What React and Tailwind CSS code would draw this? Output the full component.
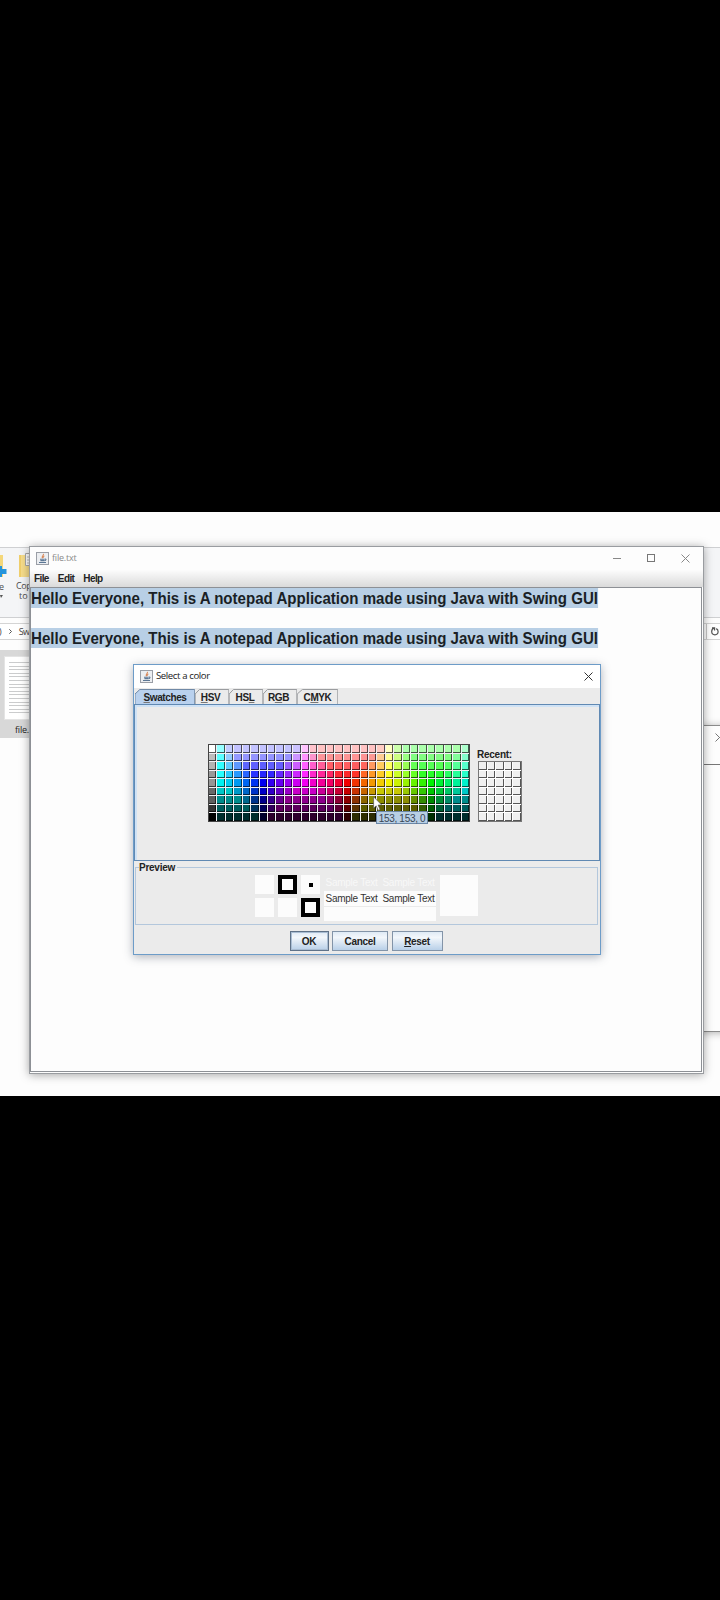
import React from "react";

const SANS = "font-['Liberation_Sans',Arial,sans-serif]";
const UI = "font-['Open_Sans','Noto_Sans',sans-serif]";

const clamp = (v, lo, hi) => Math.max(lo, Math.min(hi, v));
const GRAYS = [255, 190, 180, 153, 150, 105, 95, 51, 0];
const LOWS = [195, 148, 95, 40, 0, 0, 0, 0, 0];
const HIGHS = [255, 255, 255, 255, 242, 200, 140, 92, 45];

// Triangular hue ring over 30 columns, peaking at the given column.
function channel(col, peak) {
  const raw = Math.abs(col - peak) % 30;
  const d = Math.min(raw, 30 - raw);
  return 255 - 51 * Math.max(0, d - 5);
}

function swatch(row, col) {
  if (col === 0) return `rgb(${GRAYS[row]},${GRAYS[row]},${GRAYS[row]})`;
  let low = LOWS[row];
  if (col === 1) low = [150, 90, 50][row] ?? low;
  if (col >= 22) low = [172, 130, 85][row] ?? low;
  const c = [16, 26, 6].map((p) => clamp(channel(col, p), low, HIGHS[row]));
  return `rgb(${c.join(",")})`;
}

const SWATCHES = Array.from({ length: 9 * 31 }, (_, i) => swatch(Math.floor(i / 31), i % 31));

function JavaIcon() {
  return (
    <svg className="h-[13px] w-[13px] shrink-0" viewBox="0 0 13 13" fill="none">
      <rect x="0.5" y="0.5" width="12" height="12" fill="#eceef1" stroke="#9a9ea6" />
      <path d="M7.2 1.8C8.6 3.2 5 3.9 6.4 6.2M8.4 3.9C6.8 4.6 7 5.2 7.4 6" stroke="#d98a5c" strokeWidth="1.1" />
      <path d="M4 7.3h4.7M4.4 8.6h4M3 10.5h7M8.9 7c1.6-.3 1.3 1.5-.3 1.7" stroke="#5c7795" strokeWidth="1.1" />
    </svg>
  );
}

function Cross({ className }) {
  return (
    <svg className={className} viewBox="0 0 9 9" fill="none" stroke="currentColor">
      <path d="M0.5 0.5l8 8M8.5 0.5l-8 8" />
    </svg>
  );
}

function Tab({ mark, before = "", after, active, className }) {
  return (
    <div className={`relative flex h-full items-center justify-center ${className}`}>
      <svg className="absolute inset-0 h-full w-full" viewBox="0 0 100 15" preserveAspectRatio="none">
        <path
          d={active ? "M0 15V5L8 0.5H99.5V15" : "M0.5 15V5L13 0.5H99.5V15"}
          fill={active ? "#b9d1ee" : "#ebebeb"}
          stroke={active ? "#7089a6" : "#9a9c9f"}
          vectorEffect="non-scaling-stroke"
        />
      </svg>
      <span className="relative mt-[2px] whitespace-nowrap">
        {before}
        <span className="underline decoration-[#777] decoration-1 underline-offset-1">{mark}</span>
        {after}
      </span>
    </div>
  );
}

function Button({ children, className }) {
  return (
    <div className={`flex h-[20px] items-center justify-center border bg-linear-to-b from-[#dfeaf5] via-[#f3f7fb] via-30% to-[#b9d0e8] pt-px ${className}`}>
      {children}
    </div>
  );
}

function Explorer() {
  return (
    <div className="absolute inset-x-0 top-[35px] flex h-full flex-col">
      <div className="flex h-[71px] justify-between border-y border-[#cfd0d2] bg-[#f4f5f7]">
        <div className={`flex w-[30px] gap-[12px] overflow-hidden text-[9px] leading-[10px] text-[#4c4c4c] ${UI}`}>
          <div className="flex w-[7px] shrink-0 flex-col pt-[7px]">
            <svg className="h-[24px] w-[7px]" viewBox="0 0 7 24">
              <path d="M0 0h3v22H0z" fill="#f4d77a" />
              <path d="M0 11h2v3h4.5v5H2v3H0z" fill="#2494dc" />
            </svg>
            <span className="mt-[3px] -ml-px">e</span>
            <svg className="mt-[3px] h-[3px] w-[4px]" viewBox="0 0 4 3"><path d="M0 0h3L1 3z" fill="#555" /></svg>
          </div>
          <div className="flex flex-col pt-[5px] whitespace-nowrap">
            <svg className="h-[26px] w-[14px]" viewBox="0 0 14 26">
              <path d="M0 2h14v22H0z" fill="#f7dd8b" />
              <path d="M0 2h2v22H0z" fill="#f0cf6c" />
              <path d="M6.5 0.5H14v12H6.5z" fill="#fff" stroke="#a8a8a8" />
              <path d="M8 4h6M8 7h6M8 10h6" stroke="#bbb" />
            </svg>
            <span className="mt-[2px] -ml-[3px] tracking-[-0.4px]">Cop</span>
            <span>to</span>
          </div>
        </div>
      </div>
      <div className="mt-[5px] flex h-[17px] items-center justify-between border-y border-[#d4d4d4] bg-white">
        <div className={`flex items-center gap-[7px] text-[9px] text-[#444] ${UI}`}>
          <span className="-ml-px">)</span>
          <svg className="h-[5px] w-[3px]" viewBox="0 0 3 5" fill="none" stroke="#555"><path d="M0.3 0.3L2.5 2.5 0.3 4.7" /></svg>
          <span className="tracking-[-0.5px]">Sw</span>
        </div>
        <div className="flex h-full w-[14px] items-center border-l border-[#c8c8c8] pl-[4px]">
          <svg className="h-[9px] w-[8px]" viewBox="0 0 8 9" fill="none" stroke="#555" strokeWidth="1.2">
            <path d="M1 0.8h2.6v2.6M3.2 1.2C1.8 1.5 0.7 2.8 0.7 4.6a3.2 3.2 0 0 0 6.4 0C7.1 3.2 6.3 2 5.2 1.6" />
          </svg>
        </div>
      </div>
      <div className="mt-[10px] flex h-[88px] w-[60px] flex-col bg-[#d8d8d8] pt-[6px]">
        <div className="ml-[4px] flex h-[64px] flex-col gap-[2.6px] border border-[#e4e4e4] bg-white pt-[5px] pl-[4px]">
          {Array.from({ length: 15 }, (_, i) => (
            <div key={i} className="h-px shrink-0 bg-[#cbcccd]" />
          ))}
        </div>
        <span className={`ml-[15px] pt-[3px] text-[9px] leading-[14px] tracking-[-0.2px] text-[#222] ${UI}`}>file.</span>
      </div>
    </div>
  );
}

function ColorDialog() {
  return (
    <div className={`absolute top-[152px] left-[133px] flex h-[291px] w-[468px] flex-col border border-[#6d9cc8] bg-[#ebebeb] text-[10px] font-bold tracking-[-0.4px] text-[#222] shadow-[0_2px_9px_rgba(60,70,90,0.4)] ${SANS}`}>
      <div className={`flex h-[23px] shrink-0 items-center bg-white pr-[7px] pl-[6px] font-normal ${UI}`}>
        <JavaIcon />
        <span className="ml-[3px] grow text-[9.6px] tracking-[-0.4px] text-[#222]">Select a color</span>
        <Cross className="h-[9px] w-[9px] text-[#333]" />
      </div>
      <div className="flex h-[16px] shrink-0 pt-px pl-px">
        <Tab active mark="S" after="watches" className="w-[60px]" />
        <Tab mark="H" after="SV" className="w-[34px] pr-[3px]" />
        <Tab before="HS" mark="L" className="w-[34px] pr-[2px]" />
        <Tab before="R" mark="G" after="B" className="w-[34px] pr-[3px]" />
        <Tab before="C" mark="M" after="YK" className="w-[41px]" />
      </div>
      <div className="flex h-[157px] shrink-0 border border-[#6089b3] shadow-[inset_2px_2px_0_#cfe2f5]">
        <div className="mt-[39px] ml-[73px] grid h-[78px] w-[262px] grid-cols-[repeat(31,minmax(0,1fr))] grid-rows-[repeat(9,minmax(0,1fr))] gap-px border border-[#444] bg-[#f0f0f4]">
          {SWATCHES.map((color, i) => (
            <div key={i} className="border-r border-b border-black/65" style={{ backgroundColor: color }} />
          ))}
        </div>
        <div className="mt-[44px] ml-[7px]">
          <div className="h-[12px] leading-[12px] tracking-[-0.25px]">Recent:</div>
          <div className="ml-px grid h-[61px] w-[44px] grid-cols-[repeat(5,minmax(0,1fr))] grid-rows-[repeat(7,minmax(0,1fr))] gap-px border border-[#777] bg-white">
            {Array.from({ length: 35 }, (_, i) => (
              <div key={i} className="border-r border-b border-[#555] bg-[#f0f0f0]" />
            ))}
          </div>
        </div>
      </div>
      <div className="relative mt-[6px] mr-[2px] ml-px h-[58px] shrink-0 border border-[#b3c7dc]">
        <span className="absolute -top-[6px] left-[3px] bg-[#ebebeb] pr-[2px] leading-[12px] tracking-[-0.25px]">Preview</span>
        <div className="mt-[7px] ml-[119px] flex gap-[4px] font-normal">
          <div className="grid h-[43px] grid-cols-[19px_19px_19px] grid-rows-[19px_19px] gap-[4px]">
            <div className="bg-[#fcfcfc]" />
            <div className="border-4 border-black bg-[#fcfcfc]" />
            <div className="flex items-center justify-center bg-[#fcfcfc]"><div className="h-[4px] w-[4px] bg-black" /></div>
            <div className="bg-[#fcfcfc]" />
            <div className="bg-[#fcfcfc]" />
            <div className="border-4 border-black bg-[#fcfcfc]" />
          </div>
          <div className="flex w-[112px] flex-col text-[10px] leading-[14px] tracking-[-0.25px] whitespace-pre">
            <span className="flex h-[16px] items-center justify-between px-[1.5px] text-[#f8f8f8]"><span>Sample Text</span><span>Sample Text</span></span>
            <span className="flex h-[15px] items-center justify-between bg-[#fcfcfc] px-[1.5px] pt-px text-[#333]"><span>Sample Text</span><span>Sample Text</span></span>
            <span className="mt-px h-[14px] bg-[#fcfcfc]" />
          </div>
          <div className="h-[41px] w-[38px] bg-[#fcfcfc]" />
        </div>
      </div>
      <div className="mt-[6px] ml-[156px] flex gap-[3px] tracking-[-0.3px]">
        <Button className="w-[39px] border-[#5f7288] pr-px shadow-[inset_0_0_0_1px_#a9bdd3]">OK</Button>
        <Button className="w-[56px] border-[#8394a8]">Cancel</Button>
        <Button className="ml-px w-[51px] border-[#8394a8] pr-px"><span className="underline underline-offset-1">R</span>eset</Button>
      </div>
      <div className="absolute top-[146px] left-[242px] flex h-[13px] w-[52px] items-center justify-center border border-[#6b87a8] bg-[#b8cfe5] pt-px text-[10px] font-normal tracking-[-0.3px] text-[#3a4654]">153, 153, 0</div>
      <svg className="absolute top-[131px] left-[239px] h-[16px] w-[10px]" viewBox="0 0 10 16">
        <path d="M0.6 0.8v11.4l2.6-2.4 2 4.6 1.9-.9-2-4.4h3.7z" fill="#fff" stroke="#555" strokeWidth="0.7" />
      </svg>
    </div>
  );
}

export default function App() {
  const line = "Hello Everyone, This is A notepad Application made using Java with Swing GUI";
  return (
    <div className="flex h-[1600px] w-[720px] flex-col overflow-hidden bg-black pt-[512px]">
      <div className="relative h-[584px] w-full overflow-hidden bg-[#fdfdfd]">
        <Explorer />
        <div className="absolute top-[213px] left-[600px] h-[307px] w-[150px] border border-[#8b8b8b] bg-[#fdfdfd] shadow-[0_1px_8px_rgba(0,0,0,0.3)]">
          <div className="flex h-[39px] border-b border-[#777] pt-[7px] pl-[114px]">
            <Cross className="h-[9px] w-[9px] text-[#777]" />
          </div>
        </div>
        <div className="absolute top-[34px] left-[29px] flex h-[528px] w-[675px] flex-col border border-[#999ca0] bg-[#fdfdfd] shadow-[0_1px_9px_rgba(0,0,0,0.35)]">
          <div className={`flex h-[23px] shrink-0 items-center pb-px pl-[6px] text-[9px] tracking-[-0.2px] text-[#8a8a8a] ${UI}`}>
            <JavaIcon />
            <span className="ml-[3px] grow">file.txt</span>
            <div className="flex items-center gap-[26px] pr-[13px]">
              <div className="h-px w-[8px] bg-[#888]" />
              <div className="h-[8px] w-[8px] border border-[#777]" />
              <Cross className="h-[9px] w-[9px] text-[#888]" />
            </div>
          </div>
          <div className={`flex h-[17px] shrink-0 items-center gap-[9px] bg-linear-to-b from-[#fcfcfc] to-[#dadada] pb-px pl-[4px] text-[10px] font-bold tracking-[-0.6px] text-[#222] ${SANS}`}>
            <span>File</span>
            <span>Edit</span>
            <span>Help</span>
          </div>
          <div className={`mr-[1px] mb-[1px] grow border border-[#8d9095] text-[16px] font-bold text-[#1a1f26] ${SANS}`}>
            <div className="flex h-[20px]"><span className="origin-left scale-x-[0.942] bg-[#b8cfe5] pt-px leading-[19px] whitespace-nowrap">{line}</span></div>
            <div className="mt-[20px] flex h-[20px]"><span className="origin-left scale-x-[0.942] bg-[#b8cfe5] pt-px leading-[19px] whitespace-nowrap">{line}</span></div>
          </div>
        </div>
        <ColorDialog />
      </div>
    </div>
  );
}
